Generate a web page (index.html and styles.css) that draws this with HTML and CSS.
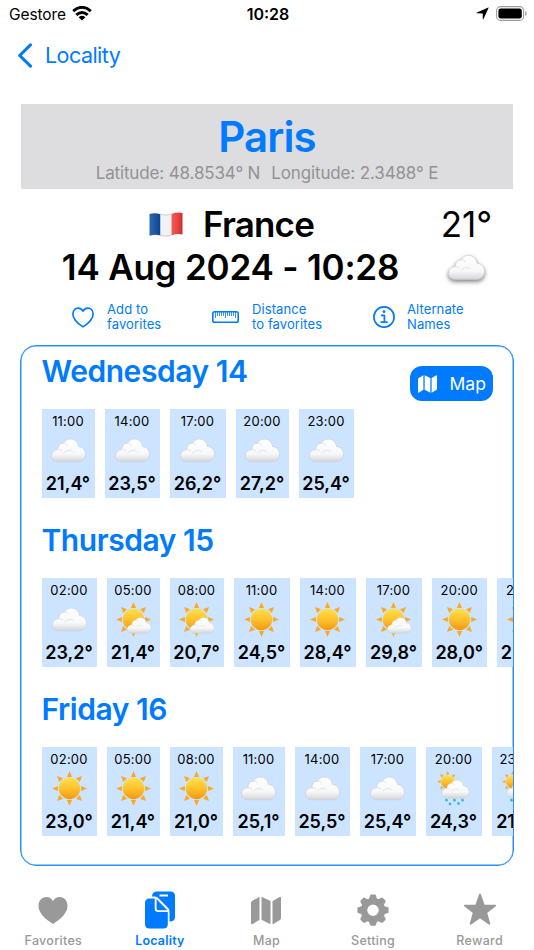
FILE: index.html
```html
<!DOCTYPE html>
<html lang="en">
<head>
  <meta charset="UTF-8" />
  <meta name="viewport" content="width=device-width, initial-scale=1.0" />
  <title>Locality - Paris</title>
  <link rel="stylesheet" href="styles.css">
</head>
<body>
  <!-- Shared icons -->
  <svg class="sprite" aria-hidden="true">
    <defs>
      <linearGradient id="cloudFill" x1="0" y1="0" x2="0" y2="1">
        <stop offset="0" stop-color="#ffffff" />
        <stop offset="0.65" stop-color="#f7f8f9" />
        <stop offset="1" stop-color="#d2d5da" />
      </linearGradient>
      <linearGradient id="sunFill" x1="0" y1="0" x2="0" y2="1">
        <stop offset="0" stop-color="#ffe04a" />
        <stop offset="0.5" stop-color="#fec22e" />
        <stop offset="1" stop-color="#f5960f" />
      </linearGradient>
      <linearGradient id="flagRed" x1="0" y1="0" x2="1" y2="0">
        <stop offset="0" stop-color="#f25a58" />
        <stop offset="0.5" stop-color="#ea4644" />
        <stop offset="1" stop-color="#d02d30" />
      </linearGradient>
      <linearGradient id="flagBlue" x1="0" y1="0" x2="1" y2="0">
        <stop offset="0" stop-color="#2d68b0" />
        <stop offset="1" stop-color="#0b4590" />
      </linearGradient>
      <g id="cloudShape">
        <path d="M7 23.300C3 23.300.5 21 .5 17.600C.5 14 3 11.300 6.800 11.100C6.900 7.300 9.300 4.500 12.500 4.700C14.200 1.700 16.800.5 19.500.6C23.800.8 27 3.600 27.400 8C31.700 8.300 34.500 11.500 34.500 15.800C34.500 20.300 31.500 23.300 27.200 23.300Z" fill="url(#cloudFill)" stroke="#c8ccd2" stroke-width=".6" />
        <path d="M6.800 11.100C8.300 11 9.600 11.600 10.700 12.400M12.500 4.700C14 4.500 15.400 5.200 16.200 6.500M12.500 14.500C14.500 11.800 19.200 11.200 21.300 13" fill="none" stroke="#dcdfe3" stroke-width=".9" stroke-linecap="round" />
      </g>
      <g id="sunShape">
        <path d="M17.500 0L20.100 5.900H14.900ZM17.500 35L20.100 29.100H14.900ZM0 17.500L5.900 14.900V20.100ZM35 17.500L29.100 14.900V20.100ZM5 5L11 7.200L7.200 11ZM30 5L27.800 11L24 7.200ZM5 30L7.200 24L11 27.800ZM30 30L24 27.800L27.800 24Z" fill="#f8a928" />
        <circle cx="17.500" cy="17.500" r="10.700" fill="url(#sunFill)" />
      </g>
    </defs>
    <symbol id="cloud" viewBox="0 0 35 35"><use href="#cloudShape" y="5.500" /></symbol>
    <symbol id="sun" viewBox="0 0 35 35"><use href="#sunShape" /></symbol>
    <symbol id="sun-cloud" viewBox="0 0 35 35">
      <use href="#sunShape" />
      <use href="#cloudShape" transform="translate(11 15) scale(.7)" />
    </symbol>
    <symbol id="sun-rain" viewBox="0 0 35 35">
      <use href="#sunShape" transform="translate(1 0) scale(.61)" />
      <use href="#cloudShape" transform="translate(5.500 8.500) scale(.8)" />
      <path d="M9.500 28.200Q12 27.500 11.500 30Q9 31 9.500 28.200ZM17.500 28.200Q20 27.500 19.500 30Q17 31 17.500 28.200ZM25.500 28.200Q28 27.500 27.500 30Q25 31 25.500 28.200ZM13 32Q15.500 31.300 15 33.800Q12.500 34.800 13 32ZM21.500 31.500Q24 30.800 23.500 33.300Q21 34.300 21.500 31.500Z" fill="#30b2ee" stroke="#30b2ee" stroke-width=".6" />
    </symbol>
    <symbol id="map" viewBox="0 0 30 28">
      <path d="M0 6.500Q0 5.200 1.100 4.600L8.500.3V23.200L1.600 27.600Q0 28.400 0 26.700ZM10.500.2L19.500 4.600V27.800L10.500 23.200ZM21.500 4.700L28.400.4Q30 -.4 30 1.300V21.600Q30 22.800 28.900 23.500L21.500 27.900Z" />
    </symbol>
  </svg>

  <header class="status-bar">
    <div class="carrier">
      <span>Gestore</span>
      <svg width="20" height="15" viewBox="0 0 20 15" fill="none" stroke="#000" stroke-width="2.900">
        <path d="M1.200 5.200Q10 -2.500 18.800 5.200M4.300 8.800Q10 4 15.700 8.800" />
        <path d="M6.600 11.200Q10 8.500 13.400 11.200L10 14.600Z" fill="#000" stroke="none" />
      </svg>
    </div>
    <div class="clock">10:28</div>
    <div class="indicators">
      <svg width="13" height="13" viewBox="0 0 13 13"><path d="M12.300.5Q12.800.1 12.500 1L7.500 12Q6.900 13 6.800 11.800L6.700 6.500L1 6.300Q0 6.200 .9 5.600Z" /></svg>
      <svg width="31" height="15" viewBox="0 0 31 15">
        <rect x=".6" y=".6" width="27" height="13.800" rx="4" fill="none" stroke="#9b9b9b" stroke-width="1.100" />
        <rect x="2.400" y="2.400" width="23.400" height="10.200" rx="2.400" />
        <path d="M29.200 5Q30.700 5.800 30.700 7.500T29.200 10Z" fill="#9b9b9b" />
      </svg>
    </div>
  </header>

  <nav class="nav-bar">
    <svg width="15" height="25" viewBox="0 0 15 25"><path d="M12.500 1.800L1.700 12.500L12.500 23.200" fill="none" stroke="#007aff" stroke-width="3.100" stroke-linecap="round" stroke-linejoin="round" /></svg>
    <span>Locality</span>
  </nav>

  <main>
    <section class="city">
      <h1>Paris</h1>
      <p><span>Latitude: 48.8534° N</span><span>Longitude: 2.3488° E</span></p>
    </section>

    <section class="summary">
      <div class="country">
        <svg width="34" height="25" viewBox="0 0 34 25">
          <path d="M.5 2Q6 .3 11.500 2.300V23.500Q6 22 .5 23.800Z" fill="url(#flagBlue)" />
          <path d="M11.500 2.300Q17 4.200 22.500 2V23.300Q17 25.200 11.500 23.500Z" fill="#f1f2f4" />
          <path d="M11.500 2.300Q17 4.200 22.500 2M11.500 23.500Q17 25.200 22.500 23.300" fill="none" stroke="#b9bcc0" stroke-width=".7" />
          <path d="M22.500 2Q28 -.2 33.500 1V22.500Q28 21.200 22.500 23.300Z" fill="url(#flagRed)" />
        </svg>
        <span>France</span>
      </div>
      <div class="now-temp">21°</div>
      <div class="date">14 Aug 2024 - 10:28</div>
      <div class="now-icon"><svg><use href="#cloud" /></svg></div>
    </section>

    <section class="actions">
      <a class="action">
        <svg width="22" height="21" viewBox="0 0 22 21" fill="none" stroke="#007aff" stroke-width="1.700" stroke-linejoin="round"><path d="M11 19.900C5.500 16.300 .9 12 .9 6.900C.9 3.500 3.200 1.100 6.200 1.100C8.400 1.100 10 2.300 11 4.200C12 2.300 13.600 1.100 15.800 1.100C18.800 1.100 21.100 3.500 21.100 6.900C21.100 12 16.500 16.300 11 19.900Z" /></svg>
        <span>Add to<br>favorites</span>
      </a>
      <a class="action">
        <svg width="27" height="12" viewBox="0 0 27 12" fill="none" stroke="#007aff"><rect x=".8" y=".8" width="25.400" height="10.400" rx="1.800" stroke-width="1.600" /><path d="M3.500 1V7M13.500 1V7M23.500 1V7M5.500 1V5M7.500 1V5M9.500 1V5M11.500 1V5M15.500 1V5M17.500 1V5M19.500 1V5M21.500 1V5" stroke-width=".8" /></svg>
        <span>Distance<br>to favorites</span>
      </a>
      <a class="action info">
        <svg width="22" height="22" viewBox="0 0 22 22" fill="none" stroke="#007aff"><circle cx="11" cy="11" r="10.100" stroke-width="1.700" /><path d="M8.600 9.300H11.400V16M8.200 16.100H14" stroke-width="1.700" stroke-linecap="round" stroke-linejoin="round" /><circle cx="11" cy="5.700" r="1.400" fill="#007aff" stroke="none" /></svg>
        <span>Alternate<br>Names</span>
      </a>
    </section>

    <section class="forecast">
      <a class="map-button"><svg width="19" height="18"><use href="#map" /></svg>Map</a>

      <h2 class="wed">Wednesday 14</h2>
      <div class="hours hours-wed">
        <div class="hour"><time>11:00</time><svg><use href="#cloud" /></svg><b>21,4°</b></div>
        <div class="hour"><time>14:00</time><svg><use href="#cloud" /></svg><b>23,5°</b></div>
        <div class="hour"><time>17:00</time><svg><use href="#cloud" /></svg><b>26,2°</b></div>
        <div class="hour"><time>20:00</time><svg><use href="#cloud" /></svg><b>27,2°</b></div>
        <div class="hour"><time>23:00</time><svg><use href="#cloud" /></svg><b>25,4°</b></div>
      </div>

      <h2>Thursday 15</h2>
      <div class="hours hours-thu">
        <div class="hour"><time>02:00</time><svg><use href="#cloud" /></svg><b>23,2°</b></div>
        <div class="hour"><time>05:00</time><svg><use href="#sun-cloud" /></svg><b>21,4°</b></div>
        <div class="hour"><time>08:00</time><svg><use href="#sun-cloud" /></svg><b>20,7°</b></div>
        <div class="hour"><time>11:00</time><svg><use href="#sun" /></svg><b>24,5°</b></div>
        <div class="hour"><time>14:00</time><svg><use href="#sun" /></svg><b>28,4°</b></div>
        <div class="hour"><time>17:00</time><svg><use href="#sun-cloud" /></svg><b>29,8°</b></div>
        <div class="hour"><time>20:00</time><svg><use href="#sun" /></svg><b>28,0°</b></div>
        <div class="hour"><time>23:00</time><svg><use href="#sun" /></svg><b>25,2°</b></div>
      </div>

      <h2>Friday 16</h2>
      <div class="hours hours-fri">
        <div class="hour"><time>02:00</time><svg><use href="#sun" /></svg><b>23,0°</b></div>
        <div class="hour"><time>05:00</time><svg><use href="#sun" /></svg><b>21,4°</b></div>
        <div class="hour"><time>08:00</time><svg><use href="#sun" /></svg><b>21,0°</b></div>
        <div class="hour"><time>11:00</time><svg><use href="#cloud" /></svg><b>25,1°</b></div>
        <div class="hour"><time>14:00</time><svg><use href="#cloud" /></svg><b>25,5°</b></div>
        <div class="hour"><time>17:00</time><svg><use href="#cloud" /></svg><b>25,4°</b></div>
        <div class="hour"><time>20:00</time><svg><use href="#sun-rain" /></svg><b>24,3°</b></div>
        <div class="hour"><time>23:00</time><svg><use href="#sun-rain" /></svg><b>21,8°</b></div>
      </div>
    </section>
  </main>

  <footer class="tab-bar">
    <a class="tab">
      <svg width="30" height="38" viewBox="0 0 30 38"><path d="M15 33C7 28 .5 22 .5 14.800C.5 9.700 3.900 6 8.300 6C11.300 6 13.700 7.600 15 10.100C16.300 7.600 18.700 6 21.700 6C26.100 6 29.500 9.700 29.500 14.800C29.500 22 23 28 15 33Z" /></svg>
      <span>Favorites</span>
    </a>
    <a class="tab active">
      <svg width="30" height="38" viewBox="0 0 30 38">
        <path d="M7 5.500Q7.300.5 12 .5H25.500Q30 .5 30 5V26Q30 30.200 25.500 30.500H24.500V20Q24.500 18.300 23.200 17L13.500 7.200Q12 5.500 10 5.500ZM14.500 3.500V5.500H23V3.500Z" fill-rule="evenodd" />
        <path d="M0 12Q0 7.500 4.500 7.500H9.700V17.500Q9.700 21 13.200 21H22.800V33Q22.800 37.500 18.300 37.500H4.500Q0 37.500 0 33ZM11.600 8.300L22.300 19.200H13.200Q11.600 19.200 11.600 17.600Z" />
      </svg>
      <span>Locality</span>
    </a>
    <a class="tab">
      <svg width="30" height="38" viewBox="0 0 30 38"><use href="#map" x="0" y="5.500" width="30" height="28" /></svg>
      <span>Map</span>
    </a>
    <a class="tab">
      <svg width="32" height="38" viewBox="0 0 32 38">
        <g transform="translate(16 19.200)">
          <circle r="9" fill="none" stroke="#999" stroke-width="6.500" />
          <g id="teeth">
            <path id="tooth" d="M-4.300 -10.500L-2.900 -14.800Q-2.700 -15.600 -1.900 -15.600H1.900Q2.700 -15.600 2.900 -14.800L4.300 -10.500Z" />
            <use href="#tooth" transform="rotate(45)" />
            <use href="#tooth" transform="rotate(90)" />
            <use href="#tooth" transform="rotate(135)" />
          </g>
          <use href="#teeth" transform="rotate(180)" />
        </g>
      </svg>
      <span>Setting</span>
    </a>
    <a class="tab">
      <svg width="34" height="38" viewBox="0 0 34 38"><path d="M17 3.500L20.800 14.300L32.200 14.600L23.200 21.600L26.400 32.800L17 26.300L7.600 32.800L10.800 21.600L1.800 14.600L13.200 14.300Z" stroke="#999" stroke-width="1.800" stroke-linejoin="round" /></svg>
      <span>Reward</span>
    </a>
  </footer>
</body>
</html>
```

FILE: styles.css
```css
/* Base Styles */
* {
  box-sizing: border-box;
  margin: 0;
  padding: 0;
}
body {
  width: 534px;
  height: 950px;
  overflow: hidden;
  font-family: Inter, 'Liberation Sans', sans-serif;
  background: #fff;
  color: #000;
}
svg {
  display: block;
  flex-shrink: 0;
}
.sprite {
  position: absolute;
  width: 0;
  height: 0;
}

/* Status Bar */
.status-bar {
  display: grid;
  grid-template-columns: 1fr auto 1fr;
  align-items: center;
  height: 28px;
  padding: 0 7px 0 9px;
  font-size: 15.5px;
}
.carrier {
  display: flex;
  align-items: center;
  gap: 6px;
  letter-spacing: -0.1px;
}
.carrier svg {
  margin-top: -2px;
}
.clock {
  font-size: 16px;
  font-weight: 600;
}
.indicators {
  display: flex;
  align-items: center;
  justify-content: flex-end;
  gap: 7px;
  margin-top: -2px;
}

/* Navigation */
.nav-bar {
  display: flex;
  align-items: center;
  gap: 12px;
  height: 54px;
  padding-left: 18px;
  color: #007aff;
  font-size: 21.5px;
  letter-spacing: -0.55px;
}

/* City Banner */
.city {
  height: 85px;
  margin: 22px 21px 0;
  padding-top: 8px;
  background: #dddddf;
  text-align: center;
}
.city h1 {
  color: #007aff;
  font-size: 42px;
  font-weight: 600;
  line-height: 50px;
  letter-spacing: -0.9px;
}
.city p {
  display: flex;
  justify-content: center;
  gap: 11px;
  color: #929294;
  font-size: 17px;
  line-height: 22px;
  letter-spacing: -0.14px;
}

/* Summary */
.summary {
  display: grid;
  grid-template-columns: 379px 93px;
  grid-auto-rows: 43px;
  justify-items: center;
  align-items: center;
  padding: 13.5px 0 0 41px;
  font-size: 35px;
  font-weight: 600;
}
.country {
  display: flex;
  align-items: center;
  gap: 20px;
  padding-left: 2px;
  letter-spacing: -0.8px;
}
.date {
  letter-spacing: -0.2px;
}
.now-temp {
  font-weight: 400;
}
.now-icon svg {
  width: 37px;
  height: 37px;
  filter: drop-shadow(0 2px 2px rgba(0,0,0,0.5));
}

/* Actions */
.actions {
  display: grid;
  grid-template-columns: 140px 161px auto;
  padding: 13.5px 0 13px 72px;
  color: #007aff;
  font-size: 13px;
  line-height: 15px;
  letter-spacing: 0.1px;
}
.action {
  display: flex;
  align-items: center;
  gap: 13px;
}
.action.info {
  gap: 12px;
}

/* Forecast */
.forecast {
  position: relative;
  height: 521px;
  margin: 0 20px;
  padding: 7px 0 0 20.5px;
  overflow: hidden;
  border: 1px solid #2a8eff;
  border-radius: 16px;
  box-shadow: inset 0 0 0 0.5px #2a8eff;
}
.forecast h2 {
  margin: 24px 0 20px;
  color: #007aff;
  font-size: 30px;
  font-weight: 600;
  line-height: 36px;
  letter-spacing: -0.45px;
}
.forecast h2.wed {
  margin-top: 0;
}
.map-button {
  position: absolute;
  top: 20px;
  right: 20.5px;
  display: flex;
  align-items: center;
  gap: 13px;
  width: 83px;
  height: 35px;
  padding-left: 8px;
  border-radius: 12px;
  background: #007aff;
  color: #fff;
  fill: #fff;
  font-size: 17.5px;
}
.hours {
  display: grid;
  gap: 10px;
}
.hours-wed {
  grid-template-columns: 53px 55px 56px 53px 55px;
}
.hours-thu {
  grid-template-columns: 55px 53px 54px 56px 56px 56px 55.5px 55px;
}
.hours-fri {
  grid-template-columns: 55px 53px 53px 52px 55px 56px 56px 53px;
}
.hour {
  display: flex;
  flex-direction: column;
  align-items: center;
  height: 89px;
  padding-top: 4px;
  background: #cce4ff;
}
.hour time {
  font-size: 13px;
  line-height: 16px;
  letter-spacing: 0.2px;
}
.hour svg {
  width: 35px;
  height: 35px;
  margin: 4px 0;
}
.hour b {
  font-size: 18px;
  font-weight: 600;
  line-height: 23px;
}

/* Tab Bar */
.tab-bar {
  display: grid;
  grid-template-columns: repeat(5, 1fr);
  margin-top: 25px;
  padding-right: 1px;
  color: #999;
  fill: #999;
  font-size: 12.5px;
  font-weight: 500;
  letter-spacing: 0.3px;
}
.tab {
  display: flex;
  flex-direction: column;
  align-items: center;
  gap: 3px;
  line-height: 17px;
}
.tab.active {
  color: #007aff;
  fill: #007aff;
  font-weight: 600;
  letter-spacing: 0.2px;
}
```
